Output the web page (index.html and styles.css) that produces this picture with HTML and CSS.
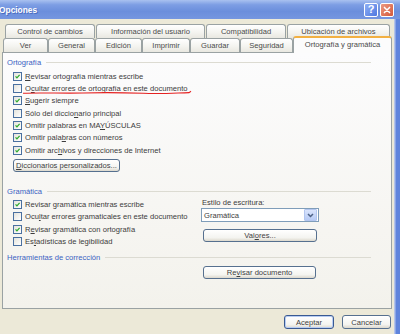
FILE: index.html
```html
<!DOCTYPE html>
<html lang="es">
<head>
<meta charset="utf-8">
<title>Opciones</title>
<link rel="stylesheet" href="styles.css">
</head>
<body>
<div class="window">
  <div class="titlebar">
    <span class="title">Opciones</span>
    <span class="tb-btn tb-help">?</span>
    <span class="tb-btn tb-close"><svg width="14" height="14" viewBox="0 0 14 14"><path d="M4 4 L10 10 M10 4 L4 10" stroke="#fff" stroke-width="1.8" stroke-linecap="round"/></svg></span>
  </div>
  <div class="frame">
    <div class="client">
      <div class="tabrow row1">
        <div class="tab w-control">Control de cambios</div>
        <div class="tab w-info">Información del usuario</div>
        <div class="tab w-compat">Compatibilidad</div>
        <div class="tab w-ubic">Ubicación de archivos</div>
      </div>
      <div class="tabrow row2">
        <div class="tab w-ver">Ver</div>
        <div class="tab w-general">General</div>
        <div class="tab w-edicion">Edición</div>
        <div class="tab w-imprimir">Imprimir</div>
        <div class="tab w-guardar">Guardar</div>
        <div class="tab w-seguridad">Seguridad</div>
        <div class="tab tab-active w-orto">Ortografía y gramática</div>
      </div>
      <div class="panel">
        <div class="group-head"><span class="group-label">Ortografía</span><span class="group-line"></span></div>
        <div class="checks">
          <div class="chk"><span class="box on"><svg viewBox="0 0 9 9"><path d="M2 4.3 L3.8 6.2 L7.2 2.4" /></svg></span><span><u>R</u>evisar ortografía mientras escribe</span></div>
          <div class="chk chk-marked"><span class="box"></span><span>O<u>c</u>ultar errores de ortografía en este documento</span>
            <svg class="redline" width="170" height="6" viewBox="0 0 170 6"><path d="M0 3.2 C 20 2.4, 40 3.6, 60 3 S 100 2.6, 120 3.3 S 150 3.1, 166 2.6 L 168 1.2" /></svg>
          </div>
          <div class="chk"><span class="box on"><svg viewBox="0 0 9 9"><path d="M2 4.3 L3.8 6.2 L7.2 2.4" /></svg></span><span><u>S</u>ugerir siempre</span></div>
          <div class="chk"><span class="box"></span><span>Sólo del diccio<u>n</u>ario principal</span></div>
          <div class="chk"><span class="box on"><svg viewBox="0 0 9 9"><path d="M2 4.3 L3.8 6.2 L7.2 2.4" /></svg></span><span>Omitir palabras en MA<u>Y</u>ÚSCULAS</span></div>
          <div class="chk"><span class="box on"><svg viewBox="0 0 9 9"><path d="M2 4.3 L3.8 6.2 L7.2 2.4" /></svg></span><span>Omitir pala<u>b</u>ras con números</span></div>
          <div class="chk"><span class="box on"><svg viewBox="0 0 9 9"><path d="M2 4.3 L3.8 6.2 L7.2 2.4" /></svg></span><span>Omitir arc<u>h</u>ivos y direcciones de Internet</span></div>
        </div>
        <div class="btn btn-dicc"><span><u>D</u>iccionarios personalizados...</span></div>

        <div class="group-head gh-gram"><span class="group-label">Gramática</span><span class="group-line"></span></div>
        <div class="gram">
          <div class="checks checks-gram">
            <div class="chk"><span class="box on"><svg viewBox="0 0 9 9"><path d="M2 4.3 L3.8 6.2 L7.2 2.4" /></svg></span><span>Revisar gramática mientras escribe</span></div>
            <div class="chk"><span class="box"></span><span>Ocu<u>l</u>tar errores gramaticales en este documento</span></div>
            <div class="chk"><span class="box on"><svg viewBox="0 0 9 9"><path d="M2 4.3 L3.8 6.2 L7.2 2.4" /></svg></span><span>R<u>e</u>visar gramática con ortografía</span></div>
            <div class="chk"><span class="box"></span><span>Es<u>t</u>adísticas de legibilidad</span></div>
          </div>
          <div class="style-col">
            <div class="style-label">Estilo de escritura:</div>
            <div class="select"><span class="select-text">Gramática</span><span class="select-arrow"><svg width="9" height="9" viewBox="0 0 9 9"><path d="M2 3 L4.5 5.5 L7 3" /></svg></span></div>
            <div class="btn btn-valores"><span>Val<u>o</u>res...</span></div>
          </div>
        </div>

        <div class="group-head gh-herr"><span class="group-label">Herramientas de corrección</span><span class="group-line"></span></div>
        <div class="btn btn-revisar"><span>Re<u>v</u>isar documento</span></div>
      </div>
      <div class="footer">
        <div class="btn btn-default btn-ok"><span>Aceptar</span></div>
        <div class="btn btn-cancel"><span>Cancelar</span></div>
      </div>
    </div>
    <div class="rborder"></div>
  </div>
</div>
</body>
</html>
```

FILE: styles.css
```css
html, body {
  margin: 0;
  padding: 0;
  overflow: hidden;
}
body {
  width: 400px;
  height: 334px;
  font-family: "Liberation Sans", Arial, sans-serif;
  font-size: 7.6px;
  color: #3c3c3c;
  background: #ECE9D8;
}
u { text-decoration: underline; text-underline-offset: 1px; }

.window {
  width: 400px;
  height: 334px;
  display: flex;
  flex-direction: column;
}

/* title bar */
.titlebar {
  height: 19px;
  flex: none;
  display: flex;
  align-items: center;
  background: linear-gradient(#a9c1f0 0%, #7d9ee4 25%, #6b8edc 60%, #7596e0 100%);
  padding-right: 6px;
}
.title {
  font-weight: bold;
  font-size: 8.4px;
  color: #fff;
  text-shadow: 1px 1px 0 #4a6cc0;
  flex: 1;
  margin-left: -1px;
}
.tb-btn {
  width: 14px;
  height: 14px;
  box-sizing: border-box;
  border: 1px solid #fff;
  border-radius: 2px;
  display: flex;
  align-items: center;
  justify-content: center;
  color: #fff;
  font-weight: bold;
  font-size: 11px;
  line-height: 1;
}
.tb-help {
  background: linear-gradient(135deg, #8fb0f5, #4f78e0);
  margin-right: 2px;
}
.tb-close {
  background: linear-gradient(135deg, #eb9a82, #d4583a);
}

/* frame */
.frame {
  flex: 1;
  display: flex;
  min-height: 0;
}
.client {
  width: 394px;
  display: flex;
  flex-direction: column;
  padding-top: 5px;
  box-sizing: border-box;
  background: #ECE9D8;
}
.rborder {
  width: 6px;
  background: linear-gradient(to right, #b5c4e8 0 1px, #8aa5e6 1px 2px, #5f84dc 2px);
}

/* tabs */
.tabrow {
  display: flex;
  height: 14px;
  align-items: flex-end;
}
.row1 { margin-left: 5px; gap: 1px; }
.row2 { margin-left: 3px; }
.tab {
  height: 14px;
  box-sizing: border-box;
  border: 1px solid #9aa2a3;
  border-bottom: none;
  border-radius: 3px 3px 0 0;
  background: linear-gradient(#ffffff, #f4f4f0 55%, #e9e8e1);
  display: flex;
  align-items: center;
  justify-content: center;
  color: #4a4a4a;
  white-space: nowrap;
}
.w-control { width: 90px; }
.w-info { width: 109px; }
.w-compat { width: 80px; }
.w-ubic { width: 103px; }
.w-ver { width: 45px; }
.w-general { width: 47px; }
.w-edicion { width: 47px; }
.w-imprimir { width: 48px; }
.w-guardar { width: 50px; }
.w-seguridad { width: 53px; }
.w-orto { width: 99px; }
.row2 .tab-active {
  height: 17px;
  margin-bottom: -1px;
  position: relative;
  z-index: 1;
  background: #fcfcfc;
  border-top: 2px solid #f2b042;
  align-items: flex-start;
  padding-top: 2px;
}

/* panel */
.panel {
  margin-left: 2px;
  width: 390px;
  height: 257px;
  box-sizing: border-box;
  border: 1px solid #9aa2a3;
  background: linear-gradient(#fcfcfd, #f6f5f1 70%, #f3f2ec);
  padding: 3px 0 0 4px;
  flex: none;
}
.group-head {
  height: 12px;
  display: flex;
  align-items: center;
  margin-right: 20px;
}
.group-label {
  color: #3a62c2;
  margin-right: 5px;
}
.group-line {
  flex: 1;
  border-top: 1px solid #dcdbd2;
}
.checks {
  margin-left: 6px;
  margin-top: 2px;
}
.chk {
  height: 12.33px;
  display: flex;
  align-items: center;
  position: relative;
  white-space: nowrap;
}
.box {
  width: 9px;
  height: 9px;
  box-sizing: border-box;
  border: 1px solid #4a70a0;
  background: linear-gradient(135deg, #e4e3dc, #ffffff);
  margin-right: 3px;
  flex: none;
  display: flex;
}
.box svg {
  width: 7px;
  height: 7px;
}
.box svg path {
  fill: none;
  stroke: #2aa82a;
  stroke-width: 1.6;
}
.redline {
  position: absolute;
  left: 10px;
  top: 8px;
}
.redline path {
  fill: none;
  stroke: #e52222;
  stroke-width: 1.1;
}

.btn {
  height: 13px;
  box-sizing: border-box;
  border: 1px solid #56708f;
  border-radius: 3px;
  background: linear-gradient(#ffffff, #f4f4f0 70%, #dcd8cd);
  display: flex;
  align-items: center;
  justify-content: center;
  color: #404040;
  white-space: nowrap;
}
.btn-dicc {
  width: 107px;
  margin: 3px 0 0 6px;
}
.gh-gram { margin-top: 13px; }
.gram {
  display: flex;
}
.checks-gram {
  width: 188px;
  margin-top: 1px;
}
.style-col {
  width: 118px;
  margin-top: 1px;
  display: flex;
  flex-direction: column;
}
.style-label {
  height: 10px;
  line-height: 10px;
  padding-left: 1px;
}
.select {
  height: 14px;
  box-sizing: border-box;
  border: 1px solid #7f9db9;
  background: #fff;
  display: flex;
  align-items: center;
  padding: 1px;
}
.select-text {
  flex: 1;
  padding-left: 1px;
}
.select-arrow {
  width: 11px;
  height: 10px;
  border: 1px solid #b3c6ef;
  border-radius: 1px;
  background: linear-gradient(#d9e4fc, #b7cbf5);
  display: flex;
  align-items: center;
  justify-content: center;
}
.select-arrow path {
  fill: none;
  stroke: #4d6185;
  stroke-width: 1.5;
}
.btn-valores {
  width: 114px;
  margin: 7px 0 0 2px;
}
.gh-herr { margin-top: 4px; }
.btn-revisar {
  width: 113px;
  margin: 2px 0 0 196px;
}

.footer {
  display: flex;
  justify-content: flex-end;
  gap: 8px;
  padding: 6px 3px 0 0;
}
.btn-ok { width: 50px; height: 14px; }
.btn-cancel { width: 49px; height: 14px; }
.btn-default {
  border-color: #3a5a92;
  box-shadow: inset 0 0 0 1px #b8cdf2;
}
```
